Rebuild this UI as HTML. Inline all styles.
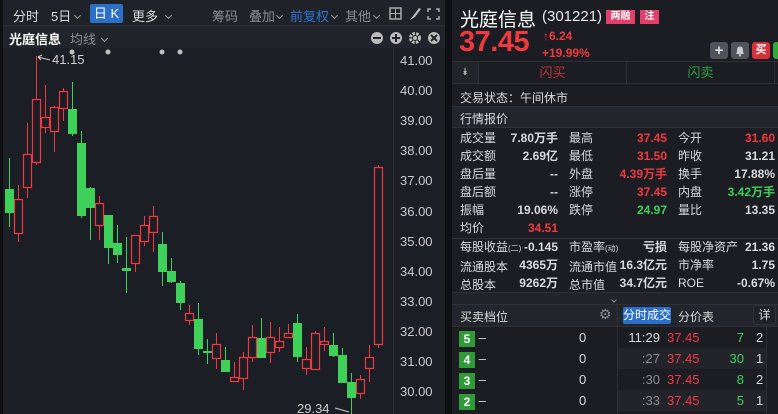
<!DOCTYPE html>
<html><head><meta charset="utf-8"><style>
*{margin:0;padding:0;box-sizing:border-box}
body{width:778px;height:414px;background:#0f1013;font-family:"Liberation Sans","Noto Sans CJK SC",sans-serif;color:#c8c9cc;overflow:hidden;position:relative;font-size:12px}
.a{position:absolute;white-space:nowrap}
.r{color:#f0393f}.g{color:#3fd05a}.w{color:#d9dadc}.gr{color:#8a8c92}
.row{position:absolute;left:452px;width:326px}
.cv{display:inline-block;width:5px;height:5px;border-right:1.5px solid #999;border-bottom:1.5px solid #999;transform:rotate(45deg);vertical-align:middle;margin:-5px 0 0 4px}
</style></head><body>
<!-- left panel -->
<div class="a" style="left:3px;top:0;width:442px;height:414px;background:#1c1e25"></div>
<div class="a" style="left:3px;top:0;width:442px;height:26px;background:#202229;border-bottom:1px solid #2a2c33"></div>
<div class="a w" style="left:13px;top:6px;font-size:13px">分时</div>
<div class="a w" style="left:51px;top:6px;font-size:13px">5日<span class="cv"></span></div>
<div class="a" style="left:90px;top:4px;width:33px;height:19px;background:#2c6fc9;border-radius:2px;color:#fff;font-size:13px;text-align:center;line-height:19px">日 K</div>
<div class="a w" style="left:132px;top:6px;font-size:13px">更多<span class="cv" style="margin-left:8px"></span></div>
<div class="a gr" style="left:212px;top:6px;font-size:13px">筹码</div>
<div class="a gr" style="left:249px;top:6px;font-size:13px">叠加<span class="cv" style="margin-left:2px"></span></div>
<div class="a" style="left:290px;top:6px;font-size:13px;color:#2f73d0">前复权<span class="cv" style="margin-left:3px"></span></div>
<div class="a gr" style="left:345px;top:6px;font-size:13px">其他<span class="cv" style="margin-left:3px"></span></div>
<svg class="a" style="left:389px;top:6px" width="60" height="16"><rect x="1" y="2" width="11" height="11" fill="none" stroke="#aaa" stroke-width="1.5"/><line x1="6.5" y1="2" x2="6.5" y2="13" stroke="#aaa"/><line x1="1" y1="7.5" x2="12" y2="7.5" stroke="#aaa"/><path d="M21 14 L24 10 L30 2 L32 3 L26 11 Z" fill="#bbb"/><path d="M39 6V3H42M47 3H50V6M50 10V13H47M42 13H39V10" fill="none" stroke="#aaa" stroke-width="1.5"/></svg>
<div class="a" style="left:3px;top:26px;width:442px;height:22px;background:#22242b"></div>
<div class="a" style="left:9px;top:29px;font-size:13px;color:#fff;font-weight:bold">光庭信息</div>
<div class="a gr" style="left:70px;top:29px;font-size:13px">均线<span class="cv" style="margin-left:6px"></span></div>
<svg class="a" style="left:369px;top:30px" width="72" height="16"><circle cx="8" cy="8" r="6" fill="#bbb"/><rect x="4" y="7" width="8" height="2" fill="#22242b"/><circle cx="27" cy="8" r="6" fill="#bbb"/><rect x="23" y="7" width="8" height="2" fill="#22242b"/><rect x="26" y="4" width="2" height="8" fill="#22242b"/><circle cx="46" cy="8" r="4.5" fill="none" stroke="#bbb" stroke-width="3" stroke-dasharray="2.5 1.2"/><circle cx="46" cy="8" r="2" fill="#bbb"/><circle cx="65" cy="8" r="6" fill="#bbb"/><path d="M62 5L68 11M68 5L62 11" stroke="#22242b" stroke-width="2"/></svg>
<div class="a" style="left:393px;top:48px;width:1px;height:366px;background:#2b2d34"></div>
<div class="a w" style="left:400px;top:53px;line-height:16px;font-size:13px;color:#c9cacd">
<div style="position:absolute;top:0">41.00</div><div style="position:absolute;top:30px">40.00</div><div style="position:absolute;top:60px">39.00</div><div style="position:absolute;top:90px">38.00</div><div style="position:absolute;top:120px">37.00</div><div style="position:absolute;top:151px">36.00</div><div style="position:absolute;top:181px">35.00</div><div style="position:absolute;top:211px">34.00</div><div style="position:absolute;top:241px">33.00</div><div style="position:absolute;top:271px">32.00</div><div style="position:absolute;top:301px">31.00</div><div style="position:absolute;top:331px">30.00</div></div>
<svg class="a" style="left:0;top:0" width="445" height="414">
<g fill="#c0c0c0"><circle cx="72" cy="52" r="2.5"/><circle cx="108" cy="52" r="2.5"/><circle cx="162" cy="52" r="2.5"/><circle cx="180" cy="52" r="2.5"/></g>
<text x="52" y="64" fill="#d0d0d0" font-size="13" font-family="Liberation Sans">41.15</text>
<path d="M38 57L50 60M38 57l4 -2M38 57l3 3" stroke="#ccc" fill="none"/>
<text x="297" y="413" fill="#d0d0d0" font-size="13" font-family="Liberation Sans">29.34</text>
<path d="M335 408L349 412" stroke="#ccc"/>
<g stroke="#f0393f" fill="none" stroke-width="1">
<path d="M18.5 185V242M27.5 123V198M36.5 56V165M45.5 85V133M54.5 106V152M63.5 88V121M99.5 196V240M135.5 235V272M144.5 216V246M153.5 206V252M189.5 305V325M216.5 333V369M234.5 362V382M243.5 352V390M252.5 325V362M270.5 322V363M279.5 327V352M288.5 324V338M306.5 347V375M315.5 331V369M324.5 327V351M360.5 375V399M369.5 345V382M378.5 165V348"/>
</g>
<g stroke="#f0393f" fill="#1c1e25" stroke-width="1.2">
<rect x="14.5" y="199.5" width="8" height="34"/><rect x="23.5" y="154.5" width="8" height="33"/><rect x="32.5" y="99.5" width="8" height="63"/><rect x="41.5" y="117.5" width="8" height="10"/><rect x="50.5" y="107.5" width="8" height="24"/><rect x="59.5" y="91.5" width="8" height="17"/><rect x="95.5" y="203.5" width="8" height="22"/><rect x="131.5" y="235.5" width="8" height="28"/><rect x="140.5" y="225.5" width="8" height="16"/><rect x="149.5" y="216.5" width="8" height="16"/><rect x="185.5" y="313.5" width="8" height="7"/><rect x="212.5" y="344.5" width="8" height="14"/><rect x="230.5" y="377.5" width="8" height="4"/><rect x="239.5" y="357.5" width="8" height="21"/><rect x="248.5" y="337.5" width="8" height="20"/><rect x="266.5" y="337.5" width="8" height="15"/><rect x="275.5" y="341.5" width="8" height="6"/><rect x="284.5" y="333.5" width="8" height="4"/><rect x="302.5" y="359.5" width="8" height="9"/><rect x="311.5" y="333.5" width="8" height="36"/><rect x="320.5" y="341.5" width="8" height="3"/><rect x="356.5" y="379.5" width="8" height="14"/><rect x="365.5" y="357.5" width="8" height="11"/><rect x="374.5" y="167.5" width="8" height="177"/>
</g>
<g stroke="#3fd05a" stroke-width="1">
<path d="M9.5 158V227M72.5 82V136M81.5 131V218M90.5 187V240M108.5 215V264M117.5 225V263M126.5 237V293M162.5 232V286M171.5 258V283M180.5 281V310M198.5 303V355M207.5 339V364M225.5 347V372M261.5 318V358M297.5 314V362M333.5 333V357M342.5 348V383M351.5 373V414"/>
</g>
<g fill="#3fd05a">
<rect x="5" y="189" width="9" height="24"/><rect x="68" y="109" width="9" height="25"/><rect x="77" y="143" width="9" height="73"/><rect x="86" y="188" width="9" height="20"/><rect x="104" y="215" width="9" height="33"/><rect x="113" y="243" width="9" height="12"/><rect x="122" y="268" width="9" height="3"/><rect x="158" y="244" width="9" height="28"/><rect x="167" y="271" width="9" height="11"/><rect x="176" y="283" width="9" height="20"/><rect x="194" y="319" width="9" height="30"/><rect x="203" y="351" width="9" height="2"/><rect x="221" y="360" width="9" height="12"/><rect x="257" y="338" width="9" height="20"/><rect x="293" y="323" width="9" height="34"/><rect x="329" y="345" width="9" height="11"/><rect x="338" y="355" width="9" height="28"/><rect x="347" y="382" width="9" height="16"/>
</g>
</svg>
<!-- right panel -->
<div class="a" style="left:452px;top:0;width:326px;height:414px;background:#1b1d23"></div>
<div class="a" style="left:460px;top:5px;font-size:19px;color:#fff">光庭信息</div>
<div class="a" style="left:542px;top:8px;font-size:15px;color:#e8e8e8">(301221)</div>
<div class="a" style="left:606px;top:10px;width:29px;height:14px;background:#e0406a;color:#fff;font-size:10px;text-align:center;line-height:14px;font-weight:bold">两融</div>
<div class="a" style="left:640px;top:10px;width:19px;height:14px;background:#e0406a;color:#fff;font-size:10px;text-align:center;line-height:14px;font-weight:bold">注</div>
<div class="a r" style="left:459px;top:26px;font-size:29px;font-weight:bold;letter-spacing:-0.5px">37.45</div>
<div class="a r" style="left:543px;top:29px;font-size:12px;font-weight:bold">↑6.24</div>
<div class="a r" style="left:542px;top:46px;font-size:12px;font-weight:bold">+19.99%</div>
<div class="a" style="left:710px;top:42px;width:18px;height:17px;background:#50535b;border-radius:3px;color:#ddd;text-align:center;line-height:17px;font-size:15px;font-weight:bold">+</div>
<svg class="a" style="left:731px;top:42px" width="18" height="17"><rect width="18" height="17" rx="3" fill="#50535b"/><path d="M5 12 Q6 11 6 8 Q6 4.5 9 4.5 Q12 4.5 12 8 Q12 11 13 12 Z" fill="#ccc"/><circle cx="9" cy="13.3" r="1.2" fill="#ccc"/></svg>
<div class="a" style="left:752px;top:42px;width:18px;height:17px;background:#d6303a;border-radius:3px;color:#fff;text-align:center;line-height:17px;font-size:11px;font-weight:bold">买</div>
<div class="a" style="left:773px;top:42px;width:5px;height:17px;background:#2fa83c;border-radius:3px 0 0 3px"></div>
<div class="row" style="top:61px;height:23px;border-top:1px solid #2e3037;border-bottom:1px solid #2e3037"></div>
<div class="a" style="left:452px;top:62px;width:26px;height:21px;background:#22242a;color:#bbb;text-align:center;font-size:10px;line-height:21px">⯯</div>
<div class="a" style="left:478px;top:62px;width:149px;height:21px;border-left:1px solid #2e3037;border-right:1px solid #2e3037;text-align:center;line-height:21px;color:#c0323a;font-size:13px">闪买</div>
<div class="a" style="left:627px;top:62px;width:148px;height:21px;border-right:1px solid #2e3037;text-align:center;line-height:21px;color:#2f9f40;font-size:13px">闪卖</div>
<div class="a w" style="left:460px;top:89px;font-size:12px">交易状态：午间休市</div>
<div class="row" style="top:106px;height:22px;background:#23252c;border-top:1px solid #2e3037;border-bottom:1px solid #2e3037"></div>
<div class="a w" style="left:460px;top:110px;font-size:12px">行情报价</div>
<div class="a" style="left:460px;top:129px;width:315px;font-size:12px;line-height:18px;font-weight:bold">
<div style="position:relative;height:108px">
<div class="a w" style="left:0;top:0;font-weight:normal">成交量<br>成交额<br>盘后量<br>盘后额<br>振幅<br>均价</div>
<div class="a w" style="right:217px;top:0;text-align:right">7.80万手<br>2.69亿<br>--<br>--<br>19.06%<br><span class="r">34.51</span></div>
<div class="a w" style="left:109px;top:0;font-weight:normal">最高<br>最低<br>外盘<br>涨停<br>跌停</div>
<div class="a" style="right:108px;top:0;text-align:right"><span class="r">37.45</span><br><span class="r">31.50</span><br><span class="r">4.39万手</span><br><span class="r">37.45</span><br><span class="g">24.97</span></div>
<div class="a w" style="left:218px;top:0;font-weight:normal">今开<br>昨收<br>换手<br>内盘<br>量比</div>
<div class="a w" style="right:0;top:0;text-align:right"><span class="r">31.60</span><br>31.21<br>17.88%<br><span class="g">3.42万手</span><br>13.35</div>
</div></div>
<div class="row" style="top:238px;height:1px;background:#2e3037"></div>
<div class="a" style="left:460px;top:238px;width:315px;font-size:12px;line-height:18px;font-weight:bold">
<div style="position:relative;height:54px">
<div class="a w" style="left:0;top:0;font-weight:normal">每股收益<span style="font-size:8px">(二)</span><br>流通股本<br>总股本</div>
<div class="a w" style="right:217px;top:0;text-align:right">-0.145<br>4365万<br>9262万</div>
<div class="a w" style="left:109px;top:0;font-weight:normal">市盈率<span style="font-size:8px">(动)</span><br>流通市值<br>总市值</div>
<div class="a w" style="right:108px;top:0;text-align:right">亏损<br>16.3亿元<br>34.7亿元</div>
<div class="a w" style="left:218px;top:0;font-weight:normal">每股净资产<br>市净率<br>ROE</div>
<div class="a w" style="right:0;top:0;text-align:right">21.36<br>1.75<br>-0.67%</div>
</div></div>
<div class="row" style="top:292px;height:12px;background:#22242a;border-top:1px solid #2e3037"></div>
<div class="a" style="left:612px;top:292px"><span class="cv" style="margin:0;width:4px;height:4px;border-color:#888"></span></div>
<div class="row" style="top:304px;height:23px;background:#23252c;border-top:1px solid #2e3037;border-bottom:1px solid #2e3037"></div>
<div class="a w" style="left:460px;top:308px;font-size:12px">买卖档位</div>
<div class="a gr" style="left:599px;top:306px;font-size:14px">⚙</div>
<div class="a" style="left:617px;top:304px;width:1px;height:110px;background:#2e3037"></div>
<div class="a" style="left:623px;top:307px;width:48px;height:17px;background:#2c6fc9;border-radius:2px;color:#fff;font-size:12px;line-height:17px;text-align:center">分时成交</div>
<div class="a w" style="left:678px;top:308px;font-size:12px">分价表</div>
<div class="a w" style="left:753px;top:305px;width:23px;height:20px;background:#1f2126;border:1px solid #333;border-radius:3px;text-align:center;line-height:18px;font-size:12px">详</div>
<div class="a" style="left:618px;top:348px;width:148px;height:21px;background:#22242a"></div>
<div class="a" style="left:618px;top:390px;width:148px;height:21px;background:#22242a"></div>
<div class="a" style="left:766px;top:327px;width:1px;height:87px;background:#2e3037"></div>
<div class="a" style="left:459px;top:327px;width:320px;font-size:13px;line-height:21px">
<div style="position:relative">
<div class="a" style="left:0;top:0"><span style="display:inline-block;width:16px;height:16px;background:#2e9b37;color:#fff;text-align:center;line-height:16px;font-size:12px;font-weight:bold;vertical-align:middle">5</span> <span class="w">–</span></div>
<div class="a" style="left:0;top:21px"><span style="display:inline-block;width:16px;height:16px;background:#2e9b37;color:#fff;text-align:center;line-height:16px;font-size:12px;font-weight:bold;vertical-align:middle">4</span> <span class="w">–</span></div>
<div class="a" style="left:0;top:42px"><span style="display:inline-block;width:16px;height:16px;background:#2e9b37;color:#fff;text-align:center;line-height:16px;font-size:12px;font-weight:bold;vertical-align:middle">3</span> <span class="w">–</span></div>
<div class="a" style="left:0;top:63px"><span style="display:inline-block;width:16px;height:16px;background:#2e9b37;color:#fff;text-align:center;line-height:16px;font-size:12px;font-weight:bold;vertical-align:middle">2</span> <span class="w">–</span></div>
<div class="a w" style="left:120px;top:0">0<br>0<br>0<br>0</div>
<div class="a" style="left:162px;top:0;text-align:right;width:39px"><span class="w">11:29</span><br><span class="gr">:27</span><br><span class="gr">:30</span><br><span class="gr">:33</span></div>
<div class="a r" style="left:208px;top:0">37.45<br>37.45<br>37.45<br>37.45</div>
<div class="a g" style="left:260px;top:0;width:25px;text-align:right">7<br>30<br>8<br>5</div>
<div class="a w" style="left:297px;top:0">2<br>1<br>2<br>1</div>
</div></div>
</body></html>
